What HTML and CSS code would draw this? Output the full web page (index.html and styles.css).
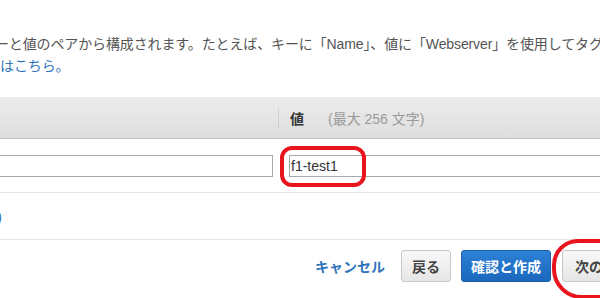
FILE: index.html
```html
<!DOCTYPE html>
<html lang="ja">
<head>
    <meta charset="UTF-8">
    <title>タグの追加</title>
    <link rel="stylesheet" href="styles.css">
</head>
<body>
  <main class="panel">
    <div class="intro">
      <div class="intro-line">キーと値のペアから構成されます。たとえば、キーに「Name」、値に「Webserver」を使用してタグを定義できます。</div>
      <div class="intro-line intro-more"><a href="#">はこちら。</a></div>
    </div>

    <div class="tag-table">
      <div class="thead">
        <div class="th key-col">キー <span class="hint">(最大 128 文字)</span></div>
        <div class="th val-col">
          <span class="divider"></span>
          <strong>値</strong>
          <span class="hint">(最大 256 文字)</span>
        </div>
      </div>
      <div class="tr">
        <div class="td key-col"><input type="text" value=""></div>
        <div class="td val-col">
          <input type="text" value="f1-test1">
          <span class="mark mark-value"></span>
        </div>
      </div>
    </div>

    <div class="add-row">
      <a href="#" class="add-link">タグの追加 (残り 49)</a>
    </div>

    <div class="actions">
      <a href="#" class="cancel">キャンセル</a>
      <button type="button" class="btn">戻る</button>
      <button type="button" class="btn btn-primary">確認と作成</button>
      <button type="button" class="btn btn-next">次の手順: セキュリティグループの設定<span class="mark mark-next"></span></button>
    </div>
  </main>
</body>
</html>
```

FILE: styles.css
```css
html, body{
  margin: 0;
  padding: 0;
  background: #fff;
}
body{
  width: 600px;
  height: 298px;
  overflow: hidden;
  font-family: "Liberation Sans", "Noto Sans CJK JP", sans-serif;
  font-size: 14px;
  color: #444;
}

/* le panneau commence hors de l'ecran, a gauche */
.panel{
  margin-left: -200px;
  width: 1000px;
}

.intro{
  padding-top: 33px;
  padding-left: 181px;
  white-space: nowrap;
}
.intro-line{
  line-height: 22px;
  height: 22px;
  color: #545454;
  letter-spacing: -0.12px;
}
.intro-more{
  padding-left: 19px;
}
.intro-more a{
  color: #2f74bb;
  text-decoration: none;
}

.tag-table{
  margin-top: 20px;
}
.thead{
  display: flex;
  height: 41px;
  background: linear-gradient(#ececec, #dedede);
  border-bottom: 1px solid #c4c4c4;
}
.th{
  display: flex;
  align-items: center;
}
.key-col{
  width: 478px;
  flex: none;
  box-sizing: border-box;
}
.val-col{
  flex: 1;
  position: relative;
}
.th.key-col{
  padding-left: 20px;
  font-weight: bold;
  color: #333;
}
.divider{
  width: 1px;
  height: 20px;
  background: #cfcfcf;
  margin-right: 11px;
}
.th strong{
  color: #333;
  margin-right: 24px;
}
.hint{
  color: #9a9a9a;
  font-weight: normal;
}

.tr{
  display: flex;
  padding: 16px 0 15px;
  border-bottom: 1px solid #e4e4e4;
}
.td.key-col{
  padding-right: 5px;
}
.td.val-col{
  padding-left: 11px;
}
input{
  display: block;
  width: 100%;
  height: 22px;
  box-sizing: border-box;
  margin: 0;
  padding: 0 1px;
  border: 1px solid #a9a9a9;
  border-radius: 0;
  font-family: "Liberation Sans", "Noto Sans CJK JP", sans-serif;
  font-size: 14px;
  color: #333;
  background: #fff;
}

.add-row{
  height: 46px;
  display: flex;
  align-items: center;
  border-bottom: 1px solid #e6e6e6;
}
.add-link{
  width: 202px;
  text-align: right;
  white-space: nowrap;
  color: #2f74bb;
  text-decoration: none;
}

.actions{
  display: flex;
  align-items: center;
  padding-top: 10px;
  padding-left: 515px;
  white-space: nowrap;
}
.cancel{
  color: #2f74bb;
  font-weight: bold;
  text-decoration: none;
  margin-right: 16px;
}
.btn{
  position: relative;
  height: 32px;
  padding: 0 10px;
  margin-right: 10px;
  border: 1px solid #c8c8c8;
  border-radius: 3px;
  background: linear-gradient(#f8f8f8, #e6e6e6);
  color: #444;
  font-family: "Liberation Sans", "Noto Sans CJK JP", sans-serif;
  font-size: 14px;
  font-weight: bold;
  flex: none;
}
.btn-primary{
  border-color: #1a5fa8;
  background: linear-gradient(#2d81d6, #1b68bd);
  color: #fff;
  margin-right: 11px;
  padding: 0 9px;
}
.btn-next{
  padding: 0 12px;
}

/* annotations rouges */
.mark{
  position: absolute;
  border: 4px solid #e8141e;
  pointer-events: none;
}
.mark-value{
  left: 2px;
  top: -9px;
  width: 78px;
  height: 33px;
  border-radius: 12px;
}
.mark-next{
  left: -11px;
  top: -12px;
  width: 108px;
  height: 52px;
  border-radius: 26px 30px 30px 30px;
}
```
